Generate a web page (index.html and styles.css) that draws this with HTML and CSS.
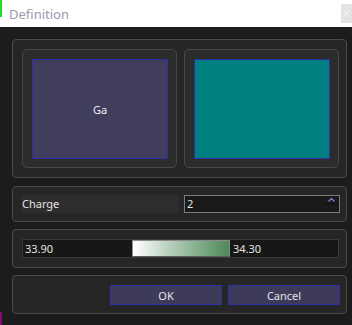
FILE: index.html
```html
<!DOCTYPE html>
<html lang="en">
<head>
    <meta charset="UTF-8">
    <title>Definition</title>
    <link rel="stylesheet" href="styles.css">
</head>
<body>
    <div class="titlebar">
        <span class="title">Definition</span>
        <span class="close">&times;</span>
    </div>

    <div class="content">
        <div class="panel colors">
            <div class="swatch-box">
                <div class="swatch swatch-element">Ga</div>
            </div>
            <div class="swatch-box">
                <div class="swatch swatch-teal"></div>
            </div>
        </div>

        <div class="panel charge-row">
            <div class="charge-label">Charge</div>
            <div class="spinbox">
                <span class="spin-value">2</span>
                <div class="spin-buttons">
                    <span class="spin-up">
                        <svg width="7" height="4" viewBox="0 0 7 4"><path d="M0.5 3.5 L3.5 0.5 L6.5 3.5" fill="none" stroke="#8a84d0" stroke-width="1.2"/></svg>
                    </span>
                    <span class="spin-down"></span>
                </div>
            </div>
        </div>

        <div class="panel range-row">
            <div class="range-field">
                <span class="range-min">33.90</span>
                <div class="gradient-bar"></div>
                <span class="range-max">34.30</span>
            </div>
        </div>

        <div class="panel button-row">
            <button class="btn">OK</button>
            <button class="btn">Cancel</button>
        </div>
    </div>
    <div class="edge-mark"></div>
</body>
</html>
```

FILE: styles.css
```css
* {
    box-sizing: border-box;
}
body {
    margin: 0;
    width: 352px;
    height: 325px;
    background-color: #1c1c1c;
    font-family: "Noto Sans", "DejaVu Sans", sans-serif;
    font-size: 11px;
    color: #e2e2e2;
    overflow: hidden;
    position: relative;
}
.titlebar {
    height: 27px;
    background-color: #ffffff;
    display: flex;
    align-items: center;
    justify-content: space-between;
    padding-left: 9px;
    position: relative;
}
/* window focus strip on the left edge */
.titlebar::before {
    content: "";
    position: absolute;
    left: 0;
    top: 0;
    width: 2px;
    height: 17px;
    background-color: #22dd22;
}
.title {
    font-size: 13px;
    color: #9a98ab;
}
.close {
    width: 11px;
    height: 19px;
    background-color: #e3e3e3;
    color: #f5f5f5;
    font-size: 12px;
    line-height: 19px;
    text-align: center;
    overflow: hidden;
}
.content {
    padding: 12px 5px 0 12px;
    display: flex;
    flex-direction: column;
    gap: 7px;
}
.panel {
    background-color: #262626;
    border: 1px solid #4a4a4a;
    border-radius: 4px;
    display: flex;
}
.colors {
    height: 139px;
    padding: 9px 7px 9px 9px;
    gap: 7px;
    margin-bottom: 1px;
}
.swatch-box {
    width: 155px;
    height: 119px;
    background-color: #2c2c2c;
    border: 1px solid #474747;
    border-radius: 5px;
    padding: 9px;
}
.swatch {
    width: 136px;
    height: 100px;
    border: 1px solid #2e2ea6;
    display: flex;
    align-items: center;
    justify-content: center;
    color: #f0f0f0;
    font-size: 11px;
}
.swatch-element {
    background-color: #413e5d;
}
.swatch-teal {
    background-color: #008080;
}
.charge-row {
    height: 36px;
    padding: 8px 6px 0 9px;
    gap: 6px;
}
.charge-label {
    width: 156px;
    height: 18px;
    background-color: #2e2e2e;
    line-height: 18px;
}
.spinbox {
    width: 156px;
    height: 18px;
    background-color: #1a1a1a;
    border: 1px solid #7c7c7c;
    display: flex;
    justify-content: space-between;
    padding-left: 2px;
}
.spin-value {
    line-height: 15px;
}
.spin-buttons {
    width: 16px;
    display: flex;
    flex-direction: column;
}
.spin-up {
    height: 8px;
    display: flex;
    align-items: center;
    justify-content: center;
    border-bottom: 1px solid #0e0e0e;
}
.spin-down {
    flex: 1;
}
.range-row {
    height: 39px;
    padding: 9px 7px 0 9px;
}
.range-field {
    width: 317px;
    height: 19px;
    background-color: #171717;
    border: 1px solid #3a3a3a;
    display: flex;
    align-items: center;
}
.range-min {
    width: 109px;
    padding-left: 2px;
}
.gradient-bar {
    width: 98px;
    height: 17px;
    background: linear-gradient(to right, #ffffff, #b4cdb8 40%, #4e8a58);
    border: 1px solid #8c8c8c;
    border-bottom-color: #5a5a5a;
}
.range-max {
    padding-left: 3px;
}
.button-row {
    height: 39px;
    padding: 9px 6px 0 97px;
    gap: 6px;
}
.btn {
    width: 112px;
    height: 20px;
    background-color: #3d3a5a;
    border: 1px solid #2f2fa8;
    color: #e6e6e6;
    font-family: "Noto Sans", "DejaVu Sans", sans-serif;
    font-size: 11px;
    padding: 0;
}
.edge-mark {
    position: absolute;
    left: 0;
    bottom: 0;
    width: 2px;
    height: 13px;
    background-color: #8a0a6e;
}
```
